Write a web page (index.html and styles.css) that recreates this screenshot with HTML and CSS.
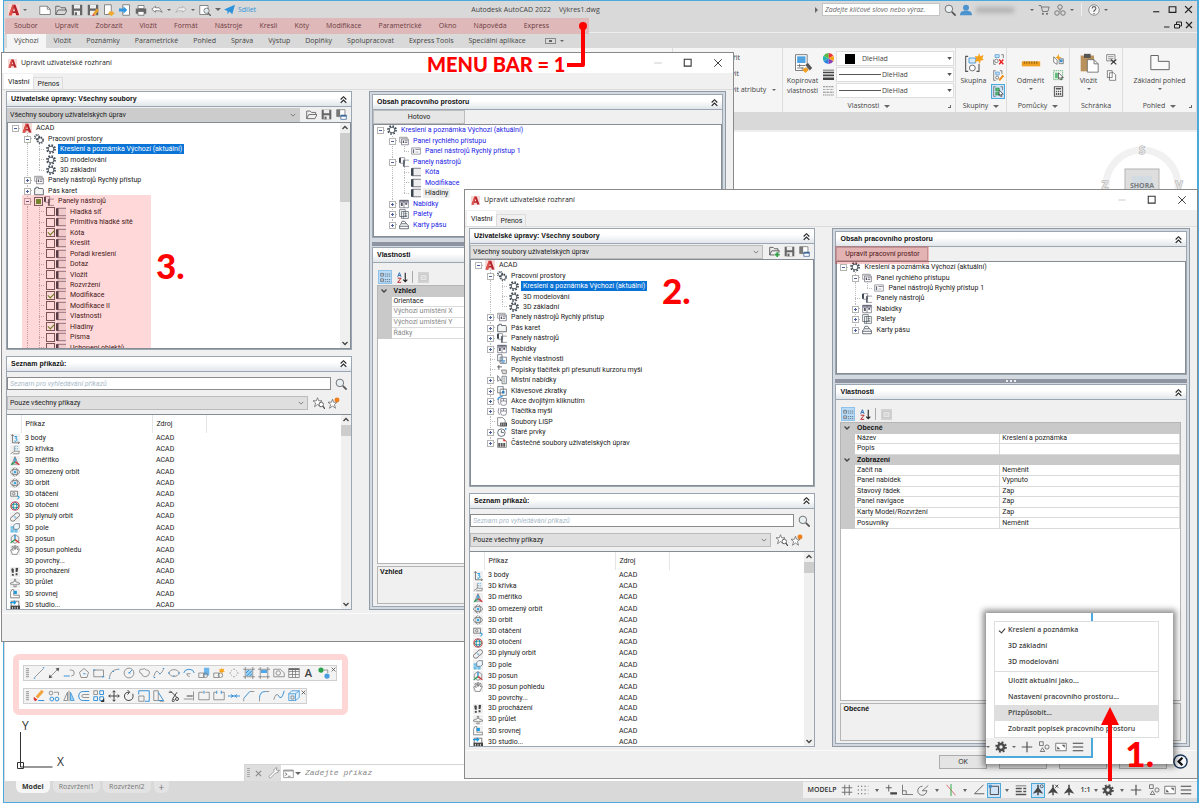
FILE: index.html
```html
<!DOCTYPE html>
<html lang="cs">
<head>
<meta charset="utf-8">
<title>Autodesk AutoCAD 2022 – Výkres1.dwg</title>
<link rel="stylesheet" href="styles.css">
</head>
<body>
<svg class="defs" aria-hidden="true">
  <symbol id="logo" viewBox="0 0 16 16"><path fill="#f6d9d6" d="M0 0h16v16H0z"/><path fill="#b5232a" d="M6 1h4l5 14h-4l-1-3H6l-1 3H1zM8 5L6.600 9.500h2.800z"/><path fill="#e0544c" d="M6 1h2L5 15H1z"/></symbol>
  <symbol id="new" viewBox="0 0 16 16"><path fill="#fff" stroke="#666" d="M1 3h10l4 4v7H1z"/><path fill="none" stroke="#666" d="M11 3v4h4"/></symbol>
  <symbol id="open" viewBox="0 0 16 16"><path fill="none" stroke="#666" stroke-width="1.300" d="M1 14V3h5l2 2h6v3M1 14l3-6h12l-3 6z"/></symbol>
  <symbol id="save" viewBox="0 0 16 16"><path fill="#666" d="M1 1h14v14H1z"/><path fill="#eee" d="M4 1h8v5H4zM4 9h8v6H4z"/><path fill="#666" d="M5 11h3v4H5z"/></symbol>
  <symbol id="saveas" viewBox="0 0 16 16"><path fill="#666" d="M1 1h14v14H1z"/><path fill="#eee" d="M4 1h8v5H4zM4 9h8v6H4z"/><path fill="#e9a22b" d="M8 13l5-7 3 2-5 7z"/><path fill="#e33" d="M8 13l3 2-4 1z"/></symbol>
  <symbol id="cloud" viewBox="0 0 16 16"><path fill="#fff" stroke="#666" d="M2 1h9v13H2z"/><path fill="#f0a92c" d="M8 10h6v2h2l-5 4-5-4h2z"/></symbol>
  <symbol id="mobile" viewBox="0 0 16 16"><path fill="#fff" stroke="#666" d="M5 1h9v14H5z"/><path fill="#3096e0" d="M0 6h6V3l5 5-5 5v-3H0z"/></symbol>
  <symbol id="print" viewBox="0 0 16 16"><path fill="#666" d="M1 6h14v7H1z"/><path fill="#fff" stroke="#666" d="M4 2h8v4H4zM4 10h8v5H4z"/></symbol>
  <symbol id="undo" viewBox="0 0 16 16"><path fill="#fff" stroke="#666" d="M1 7l5-4v2h5l4 6-4-2H6v2z"/></symbol>
  <symbol id="redo" viewBox="0 0 16 16"><path fill="#eee" stroke="#aaa" d="M15 7l-5-4v2H5l-4 6 4-2h5v2z"/></symbol>
  <symbol id="preview" viewBox="0 0 16 16"><path fill="#fff" stroke="#666" d="M1 2h11v12H1z"/><circle cx="10" cy="9" r="3.500" fill="#dfe8ef" stroke="#666"/><path stroke="#666" stroke-width="2" d="M12 12l4 4"/></symbol>
  <symbol id="plane" viewBox="0 0 16 16"><path fill="#2f93dc" d="M0 8L16 1l-4 14-4-4-3 4v-5z"/></symbol>
  <symbol id="mag" viewBox="0 0 16 16"><circle cx="6.500" cy="6.500" r="5" fill="#e8f0f4" stroke="#666" stroke-width="1.200"/><path stroke="#555" stroke-width="2.400" d="M10.500 10.500l5 5"/></symbol>
  <symbol id="user" viewBox="0 0 16 16"><circle cx="8" cy="5" r="4" fill="#4d94cf"/><path fill="#4d94cf" d="M0 15c0-5 3-6 8-6s8 1 8 6z"/></symbol>
  <symbol id="cart" viewBox="0 0 16 16"><path fill="none" stroke="#777" stroke-width="1.300" d="M1 2h3l2 8h7l2-6H5"/><circle cx="6.500" cy="13" r="1.500" fill="#777"/><circle cx="12" cy="13" r="1.500" fill="#777"/></symbol>
  <symbol id="hub" viewBox="0 0 16 16"><g fill="none" stroke="#777" stroke-width="1.300"><circle cx="8" cy="4" r="3"/><circle cx="4" cy="12" r="3"/><circle cx="12" cy="12" r="3"/><path d="M8 7v3"/></g></symbol>
  <symbol id="help" viewBox="0 0 16 16"><circle cx="8" cy="8" r="7" fill="#f4f4f4" stroke="#777"/><path fill="none" stroke="#666" stroke-width="1.500" d="M5.500 6q0-2.500 2.500-2.500T10.500 6q0 1.500-2.500 3v1.500M8 12v1.500"/></symbol>
  <symbol id="min" viewBox="0 0 16 16"><path stroke="currentColor" stroke-width="2" d="M2 12h11"/></symbol>
  <symbol id="max" viewBox="0 0 16 16"><path fill="none" stroke="currentColor" stroke-width="2" d="M2 3h12v10H2z"/></symbol>
  <symbol id="restore" viewBox="0 0 16 16"><path fill="none" stroke="currentColor" stroke-width="2" d="M1 7h10v7H1zM5 7V2h10v8h-4"/></symbol>
  <symbol id="close" viewBox="0 0 16 16"><path stroke="currentColor" stroke-width="2.400" d="M2 2l12 12M14 2L2 14"/></symbol>
  <symbol id="thinmax" viewBox="0 0 16 16"><path fill="none" stroke="#333" stroke-width="1.700" d="M2 2h11v11H2z"/></symbol>
  <symbol id="thinx" viewBox="0 0 16 16"><path stroke="#333" stroke-width="1.500" d="M2 2l12 12M14 2L2 14"/></symbol>
  <symbol id="thinmin" viewBox="0 0 16 16"><path stroke="#bbb" stroke-width="1.200" d="M2 8h12"/></symbol>
  <symbol id="dbl" viewBox="0 0 16 16"><path fill="none" stroke="#222" stroke-width="2" d="M3 8l5-5 5 5M3 14l5-5 5 5"/></symbol>
  <symbol id="up" viewBox="0 0 16 16"><path fill="none" stroke="#444" stroke-width="2.600" d="M3 11l5-5 5 5"/></symbol>
  <symbol id="down" viewBox="0 0 16 16"><path fill="none" stroke="#444" stroke-width="2.600" d="M3 5l5 5 5-5"/></symbol>
  <symbol id="addfolder" viewBox="0 0 16 16"><path fill="none" stroke="#555" stroke-width="1.300" d="M1 13V2h5l2 2h5v3M1 13l3-6h11l-1 3M1 13h7"/><path stroke="#2a9d3c" stroke-width="2.400" d="M12 9v7M8.500 12.500h7"/></symbol>
  <symbol id="layout" viewBox="0 0 16 16"><path fill="#fff" stroke="#666" d="M1 1h12v10H1z"/><path fill="#777" d="M1 1h5v10H1z"/><path fill="#fff" stroke="#27568c" d="M7 9h8v6H7z"/><path fill="#27568c" d="M7 9h8v2H7z"/></symbol>
  <symbol id="gear" viewBox="0 0 16 16"><circle cx="8" cy="8" r="6.500" fill="none" stroke="#3c4650" stroke-width="2.600" stroke-dasharray="2.550 2.550"/><circle cx="8" cy="8" r="4.600" fill="#fff" stroke="#3c4650" stroke-width="1.500"/></symbol>
  <symbol id="gears" viewBox="0 0 16 16"><circle cx="5" cy="5" r="4" fill="none" stroke="#3c4650" stroke-width="2" stroke-dasharray="1.600 1.600"/><circle cx="5" cy="5" r="2.800" fill="#fff" stroke="#3c4650"/><circle cx="10" cy="10" r="5" fill="none" stroke="#3c4650" stroke-width="2" stroke-dasharray="2 2"/><circle cx="10" cy="10" r="3.800" fill="#fff" stroke="#3c4650" stroke-width="1.300"/></symbol>
  <symbol id="quick" viewBox="0 0 16 16"><path fill="#fff" stroke="#777" d="M1 2h12v8H1z"/><path fill="#aaa" d="M1 2h12v2H1z"/><path fill="#fff" stroke="#556" d="M4 5h11v9H4z"/><path fill="#556" d="M6 7h2v4H6zM9 7h5v1.500H9zM9 10h4v1H9z"/></symbol>
  <symbol id="quick1" viewBox="0 0 16 16"><path fill="#fff" stroke="#667" d="M1 3h14v10H1z"/><path fill="#667" d="M3 5h2v6H3zM7 5h7v1.500H7zM7 9h5v1H7z"/></symbol>
  <symbol id="ribbon" viewBox="0 0 16 16"><path fill="#f4f4f4" stroke="#3c4650" stroke-width="1.200" d="M1 14V4h2V2h4v2h7l1 2v8z"/></symbol>
  <symbol id="bars" viewBox="0 0 16 16"><path fill="#fff" stroke="#667" d="M2 1h7v9H2zM7 5h9M7 5v10h9"/><path fill="#3c4650" d="M0 1h3v8H0zM7 5h2v10H7z"/></symbol>
  <symbol id="bar" viewBox="0 0 16 16"><path fill="#eee" d="M2 2h14v12H2z"/><path fill="none" stroke="#556" stroke-width="1.200" d="M16 2H2v12h14"/><path fill="#3c4650" d="M0 2h4v12H0z"/></symbol>
  <symbol id="menus" viewBox="0 0 16 16"><path fill="#fff" stroke="#556" d="M1 2h14v12H1zM1 5h14M8 2v12"/><path fill="#556" d="M1 2h14v2H1zM3 6h3v5H3zM10 6h3v3h-3z"/></symbol>
  <symbol id="palettes" viewBox="0 0 16 16"><path fill="#fff" stroke="#3c4650" d="M1 1h9v11H1zM4 4h11v11H4zM7 4v11M9 7h4M9 10h4M9 12h4"/></symbol>
  <symbol id="tabs" viewBox="0 0 16 16"><path fill="#fff" stroke="#3c4650" stroke-width="1.200" d="M3 6l2-4h4l3 4M1 14V9l3-3h8l3 3v5zM1 10h14"/></symbol>
  <symbol id="pages" viewBox="0 0 16 16"><path fill="#fff" stroke="#3c4650" d="M1 1h7v10H1zM5 5h10v10H5z"/><path stroke="#2b7fc4" stroke-width="1.500" d="M7 8h3M7 11h6M7 13h5"/></symbol>
  <symbol id="tip" viewBox="0 0 16 16"><path stroke="#222" d="M3 0v8M0 3h8"/><path fill="#ddd" stroke="#555" d="M7 8h8v6H9z"/></symbol>
  <symbol id="ctx" viewBox="0 0 16 16"><path fill="#fff" stroke="#3c4650" d="M1 1v9l3-2 3 1zM8 2h7v12H8zM10 5h3M10 8h3M10 11h3"/></symbol>
  <symbol id="keys" viewBox="0 0 16 16"><path fill="#fff" stroke="#3c4650" d="M1 1h9v10H1zM5 5h10v10H5z"/><path fill="#2b7fc4" d="M8 8h4v4H8z"/></symbol>
  <symbol id="mouse" viewBox="0 0 16 16"><path fill="#fff" stroke="#556" d="M3 3q-3 7 1 11M6 4h9v8q0 3-4.500 3T6 12zM6 8h9M10.500 4v4"/></symbol>
  <symbol id="mouse2" viewBox="0 0 16 16"><use href="#mouse"/><path fill="none" stroke="#3096e0" stroke-width="1.800" d="M1 6q1-5 8-5"/></symbol>
  <symbol id="lisp" viewBox="0 0 16 16"><path fill="#fff" stroke="#555" d="M1 1h8l4 4v9H1z"/><path fill="#444" d="M5 9h11v6H5z"/><path stroke="#fff" d="M7 10v4M10 10v4M13 10v4"/></symbol>
  <symbol id="clock" viewBox="0 0 16 16"><circle cx="7" cy="9" r="6" fill="#fff" stroke="#3c4650" stroke-width="1.200"/><path fill="none" stroke="#3c4650" stroke-width="1.300" d="M7 5v4h4"/><circle cx="14" cy="3" r="1.500" fill="#3096e0"/></symbol>
  <symbol id="cui" viewBox="0 0 16 16"><path fill="#fff" stroke="#555" d="M1 1h9l5 4v10H1z"/><path fill="#e33" d="M10 1l5 4h-5z"/><path fill="#555" d="M2 8h3v6H2zM6 8h3v6H6zM10 8h3v6h-3z"/></symbol>
  <symbol id="star" viewBox="0 0 16 16"><path fill="#fff" stroke="#666" d="M6 1l1.500 4H12L8.500 8 10 13 6 10 2 13l1.500-5L0 5h4.500z"/></symbol>
  <symbol id="starmag" viewBox="0 0 16 16"><use href="#star"/><circle cx="11" cy="10" r="3" fill="#fff" stroke="#444"/><path stroke="#444" stroke-width="1.600" d="M13 12l3 4"/></symbol>
  <symbol id="stardot" viewBox="0 0 16 16"><use href="#star" y="2"/><circle cx="12" cy="4" r="3.300" fill="#f07f1c"/></symbol>
  <symbol id="cat" viewBox="0 0 16 16"><path fill="#fff" stroke="#456" d="M1 2h4v4H1zM1 10h4v4H1zM2 4h2M2 12h2"/><path stroke="#456" stroke-dasharray="2 1" d="M7 3h8M7 6h8M7 11h8M7 14h8"/></symbol>
  <symbol id="az" viewBox="0 0 16 16"><path fill="none" stroke="#2b6cb4" stroke-width="1.400" d="M1 7l2.500-6L6 7M2 5h3"/><path fill="none" stroke="#b22" stroke-width="1.400" d="M1 9h5l-5 6h5"/><path fill="none" stroke="#222" stroke-width="1.600" d="M12 1v13M9 11l3 3 3-3"/></symbol>
  <symbol id="pg" viewBox="0 0 16 16"><path fill="#d2d2d2" d="M0 0h16v16H0z"/><path fill="#eee" stroke="#bbb" d="M3 4h10v8H3zM5 7h6M5 9h6"/></symbol>
  <symbol id="c3body" viewBox="0 0 16 16"><path fill="none" stroke="#444" d="M4 1v13h11M2 3l2-2 2 2M13 12l2 2-2 2"/><path fill="none" stroke="#1d9be0" stroke-width="1.500" d="M7 4h4L9 7q3 0 2 3t-4 1"/></symbol>
  <symbol id="ccurve" viewBox="0 0 16 16"><path fill="none" stroke="#666" d="M7 2v8L1 14M7 10h8M5 14h9l1-4"/><path stroke="#1d9be0" stroke-dasharray="2 1" d="M8 2h6M8 6h6"/></symbol>
  <symbol id="cscale" viewBox="0 0 16 16"><path fill="#cfe6f5" stroke="#555" d="M8 1l5 12H3z"/><path stroke="#1d9b4c" stroke-width="2" d="M8 9l-6 5"/><path stroke="#d33" stroke-width="2" d="M8 9l7 5"/><path stroke="#28c" stroke-width="2" d="M8 9V3"/></symbol>
  <symbol id="corbit" viewBox="0 0 16 16"><ellipse cx="8" cy="8" rx="7" ry="4" fill="none" stroke="#555"/><ellipse cx="8" cy="8" rx="4" ry="7" fill="none" stroke="#555" stroke-dasharray="7 2"/><path stroke="#1d9be0" stroke-width="2" d="M8 6v4M6 8h4"/></symbol>
  <symbol id="cspin" viewBox="0 0 16 16"><path fill="#eee" stroke="#555" d="M1 2h11v8H1z"/><circle cx="6" cy="6" r="2" fill="none" stroke="#555"/><path fill="none" stroke="#1d9be0" stroke-width="1.600" d="M11 9l4 2-3 4"/></symbol>
  <symbol id="crot" viewBox="0 0 16 16"><ellipse cx="8" cy="8" rx="6.500" ry="3" fill="none" stroke="#2a9d5c" stroke-width="1.500"/><ellipse cx="8" cy="8" rx="3" ry="6.500" fill="none" stroke="#28c" stroke-width="1.500"/><circle cx="8" cy="8" r="6.500" fill="none" stroke="#c33" stroke-width="1.500"/></symbol>
  <symbol id="cfree" viewBox="0 0 16 16"><path fill="none" stroke="#555" stroke-width="1.200" d="M5 7q5-8 9-5t-3 8M11 9q-5 8-9 5t3-8"/><path stroke="#1d9be0" stroke-width="2" d="M7 8h2"/></symbol>
  <symbol id="carr" viewBox="0 0 16 16"><path fill="#6bc0ea" d="M1 5h5v4H1zM1 10h5v5H1zM7 10h5v5H7z"/><path fill="#eef7fc" stroke="#456" d="M6 4l3-3h6v7l-3 2H6z"/></symbol>
  <symbol id="cmove" viewBox="0 0 16 16"><path fill="none" stroke="#666" d="M8 1l6 4v6l-6 4-6-4V5z"/><path stroke="#28c" stroke-width="2" d="M8 1v8"/><path stroke="#2a9d5c" stroke-width="2" d="M8 9l-7 5"/><path stroke="#c33" stroke-width="2" d="M8 9l7 5"/></symbol>
  <symbol id="chand" viewBox="0 0 16 16"><path fill="#fff" stroke="#555" d="M4 15L1 8l2-1 2 2-2-6 2-1 2 5V1h2v6l2-5 2 1-1 5 2-2 1 1-4 8z"/></symbol>
  <symbol id="cwalk" viewBox="0 0 16 16"><path fill="#444" d="M2 3q2-2 4 0v6H3zM3 11h3v3H3zM9 2q2-2 4 0l-1 6H9zM9 10h3v3H9z"/></symbol>
  <symbol id="cfly" viewBox="0 0 16 16"><path fill="#fff" stroke="#555" d="M7 2h2v4l6 2v2H9l1 4H6l1-4H1V8l6-2z"/></symbol>
  <symbol id="calign" viewBox="0 0 16 16"><path fill="#fff" stroke="#555" d="M3 1h3v9h9v4H1V5z"/><path fill="#1d9be0" d="M6 3h5v5H6z"/></symbol>
  <symbol id="c3ds" viewBox="0 0 16 16"><path fill="#fff" stroke="#444" d="M2 2h12v13H2z"/><path fill="#444" d="M1 9h15v6H1z"/><path stroke="#fff" stroke-width="1.200" d="M4 11v3M8 11v3M12 11v3"/><path fill="none" stroke="#1d9be0" stroke-width="2" d="M0 4h8M6 1l3 3-3 3"/></symbol>
  <symbol id="wheel" viewBox="0 0 16 16"><path fill="#e33" d="M8 8V0a8 8 0 0 1 7 4z"/><path fill="#f5a623" d="M8 8l7-4a8 8 0 0 1 0 8z"/><path fill="#8a3fb5" d="M8 8l7 4a8 8 0 0 1-7 4z"/><path fill="#2f7fe0" d="M8 8v8a8 8 0 0 1-7-4z"/><path fill="#25b3b0" d="M8 8l-7 4a8 8 0 0 1 0-8z"/><path fill="#58b947" d="M8 8L1 4a8 8 0 0 1 7-4z"/></symbol>
  <symbol id="lw" viewBox="0 0 16 16"><path fill="#444" d="M0 1h16v1H0zM0 4h16v2H0zM0 8h16v2.500H0zM0 12.500h16V16H0z"/></symbol>
  <symbol id="lt" viewBox="0 0 16 16"><path stroke="#555" stroke-dasharray="3 1" d="M0 2.500h16"/><path stroke="#555" stroke-dasharray="1 1" d="M0 6.500h16"/><path stroke="#555" stroke-dasharray="4 1" d="M0 10.500h16"/><path stroke="#555" stroke-dasharray="2 1" d="M0 14.500h16"/></symbol>
  <symbol id="match" viewBox="0 0 24 24"><path fill="#fff" stroke="#666" d="M3 2h14v19H3z"/><path fill="#4fa3e0" d="M5 4h10v8H5z"/><path stroke="#666" d="M5 15h10M8 13v4M5 18h8M11 17v3"/><path fill="#555" d="M15 14l3-2 5 6-3 3z"/><path fill="#f0a021" d="M15 17l4 3-4 4-4-4z"/></symbol>
  <symbol id="group" viewBox="0 0 24 24"><path fill="none" stroke="#555" stroke-width="1.300" d="M5 4H2v18h3M15 22h3v-9"/><path fill="#d5eafa" stroke="#3c8fd0" d="M6 6h8v6H6z"/><circle cx="10" cy="18" r="3.500" fill="#fff" stroke="#555"/><path fill="#f5a21b" d="M18 0l1.500 4 4-1.500-1.500 4 2 2-4 .5-1 4-2-3.500-4 1.500 1.500-4L13 4l4 0z"/></symbol>
  <symbol id="ungroup" viewBox="0 0 16 16"><path fill="none" stroke="#555" d="M1 8v7h3M12 1h3v5"/><path fill="#cfe6f8" stroke="#3c8fd0" d="M3 1h6v4H3z"/><circle cx="5" cy="10" r="2.500" fill="#fff" stroke="#555"/><path stroke="#e22" stroke-width="2" d="M9 8l6 7M15 8l-6 7"/></symbol>
  <symbol id="grpedit" viewBox="0 0 16 16"><path fill="none" stroke="#555" d="M4 1H1v14h3M10 1h3v5"/><path fill="#cfe6f8" stroke="#3c8fd0" d="M4 3h5v4H4z"/><circle cx="6" cy="11" r="2.200" fill="#fff" stroke="#555"/><path stroke="#f09020" stroke-width="3" d="M9 15l6-7"/></symbol>
  <symbol id="grpsel" viewBox="0 0 16 16"><path fill="none" stroke="#555" d="M4 1H1v14h3M11 1h3v5"/><path fill="#59bd78" stroke="#2a8d4c" d="M4 3h5v4H4zM4 9h4v4H4z"/><path fill="#fff" stroke="#333" d="M9 6l6 6-3 0 1 3-2 0-1-3-1 2z"/></symbol>
  <symbol id="ruler" viewBox="0 0 24 24"><path fill="#f0a021" d="M1 10h22v6H1z"/><path stroke="#7a5310" d="M4 10v3M7 10v3M10 10v3M13 10v3M16 10v3M19 10v3"/></symbol>
  <symbol id="qsel" viewBox="0 0 16 16"><path fill="#fff" stroke="#555" d="M1 4l5 5v6l-5-3zM9 7h6v7H9z"/><path fill="#3c8fd0" d="M10 8h4v4h-4z"/><path fill="#f5a21b" d="M8 0l1 4 4 1-4 1-1 3-2-3-3-1 3-1z"/></symbol>
  <symbol id="selall" viewBox="0 0 16 16"><path fill="none" stroke="#2a9d4c" stroke-dasharray="2 1" d="M1 1h13v13H1z"/><path fill="#59bd78" d="M3 4h4v8H3z"/><path fill="#fff" stroke="#333" d="M8 4l7 7-3 0 1 3-2 0-1-3-2 2z"/></symbol>
  <symbol id="calc" viewBox="0 0 16 16"><path fill="#fff" stroke="#555" stroke-width="1.500" d="M2 1h12v14H2z"/><path fill="#555" d="M4 3h8v2H4zM4 7h2v2H4zM7 7h2v2H7zM10 7h2v2h-2zM4 10h2v3H4zM7 10h2v3H7zM10 10h2v3h-2z"/></symbol>
  <symbol id="paste" viewBox="0 0 24 24"><path fill="#b9915c" d="M2 3h16v19H2z"/><path fill="#555" d="M6 1h8v5H6z"/><path fill="#fff" stroke="#666" d="M10 8h8l5 5v10H10zM18 8v5h5"/></symbol>
  <symbol id="cut" viewBox="0 0 16 16"><path fill="#fff" stroke="#555" d="M1 1h12v9H1zM3 4h8M3 7h8"/><path stroke="#333" stroke-width="1.500" d="M7 8l8 7M15 8l-8 7"/></symbol>
  <symbol id="copy" viewBox="0 0 16 16"><path fill="#fff" stroke="#555" d="M2 1h7v10H2zM5 4h6l3 3v8H5z"/></symbol>
  <symbol id="base" viewBox="0 0 24 24"><path fill="#fafafa" stroke="#666" stroke-width="1.200" d="M1 3h9v7h13v10H1z"/></symbol>
  <symbol id="wrench" viewBox="0 0 16 16"><path fill="#fff" stroke="#888" d="M1 13l7-7q-1-4 4-5l-1 3 2 1 2-1q0 4-5 4l-7 7z"/></symbol>
  <symbol id="prompt" viewBox="0 0 16 16"><path fill="#fff" stroke="#777" d="M1 3h14v11H1z"/><path fill="#999" d="M1 3h14v2H1z"/><path fill="none" stroke="#555" d="M3 7l3 2-3 2M7 12h4"/></symbol>
  <symbol id="grid" viewBox="0 0 16 16"><path stroke="#666" stroke-width="1.200" d="M5 1v14M11 1v14M1 5h14M1 11h14"/></symbol>
  <symbol id="dots" viewBox="0 0 16 16"><path stroke="#555" stroke-width="1.500" stroke-dasharray="1.500 3" d="M1 3h14M1 8h14M1 13h14"/></symbol>
  <symbol id="dyn" viewBox="0 0 16 16"><path stroke="#555" stroke-width="1.200" d="M5 1v9M1 5h8"/><path fill="#444" d="M7 11h9v3H7z"/></symbol>
  <symbol id="ortho" viewBox="0 0 16 16"><path fill="none" stroke="#666" stroke-width="1.100" d="M2 1v13h14M2 9h5v5"/></symbol>
  <symbol id="polar" viewBox="0 0 16 16"><circle cx="7" cy="9" r="6" fill="none" stroke="#555" stroke-dasharray="28 8"/><path fill="none" stroke="#555" d="M15 2L7 9h6"/></symbol>
  <symbol id="iso" viewBox="0 0 16 16"><path stroke="#d44" d="M2 1l12 14"/><path stroke="#3a4" stroke-width="1.300" d="M8 0v16"/></symbol>
  <symbol id="otrack" viewBox="0 0 16 16"><path fill="none" stroke="#555" stroke-width="1.200" d="M14 1L2 13h13"/></symbol>
  <symbol id="osnap" viewBox="0 0 16 16"><path fill="none" stroke="#444" stroke-width="1.200" d="M3 3h11v11H3z"/><path fill="#3c8fd0" d="M1 1h4v4H1z"/></symbol>
  <symbol id="lwt" viewBox="0 0 16 16"><path fill="#555" d="M1 2h14v1H1zM1 5h8v2H1zM11 5h4v2h-4zM1 9h8v2H1zM11 9h4v2h-4zM1 13h14v2H1z"/></symbol>
  <symbol id="anno" viewBox="0 0 16 16"><path fill="#444" d="M7 1h2v4l6 8-6-2v4H7v-4l-6 2 6-8z"/></symbol>
  <symbol id="anno1" viewBox="0 0 16 16"><use href="#anno"/><circle cx="13" cy="3" r="2" fill="none" stroke="#444"/></symbol>
  <symbol id="anno2" viewBox="0 0 16 16"><use href="#anno"/><path stroke="#444" stroke-width="1.300" d="M11 1l4 4M15 1l-4 4"/></symbol>
  <symbol id="cog" viewBox="0 0 16 16"><circle cx="8" cy="8" r="4" fill="none" stroke="#4a4a4a" stroke-width="3.500"/><circle cx="8" cy="8" r="6.500" fill="none" stroke="#4a4a4a" stroke-width="2.500" stroke-dasharray="2.550 2.550"/></symbol>
  <symbol id="plus" viewBox="0 0 16 16"><path stroke="#555" stroke-width="1.600" d="M8 1v14M1 8h14"/></symbol>
  <symbol id="iso3" viewBox="0 0 16 16"><g fill="none" stroke="#555"><path d="M2 1h5v5H2zM6 9l3 5H3z"/><circle cx="12" cy="8" r="2.800"/></g></symbol>
  <symbol id="full" viewBox="0 0 16 16"><path fill="#fff" stroke="#555" d="M1 3h14v10H1z"/><path fill="#555" d="M9 5h4v4zM7 11H3V7z"/></symbol>
  <symbol id="ham" viewBox="0 0 16 16"><path stroke="#444" stroke-width="1.600" d="M1 3h14M1 8h14M1 13h14"/></symbol>
</svg>

<main class="app">
  <header class="titlebar">
    <div class="group">
      <button class="icon big" aria-label="Nabídka aplikace"><svg><use href="#logo"/></svg></button><button class="caret" aria-label="Rozbalit"></button>
      <div class="group quick">
        <button class="icon" aria-label="Nový"><svg><use href="#new"/></svg></button>
        <button class="icon" aria-label="Otevřít"><svg><use href="#open"/></svg></button>
        <button class="icon" aria-label="Uložit"><svg><use href="#save"/></svg></button>
        <button class="icon" aria-label="Uložit jako"><svg><use href="#saveas"/></svg></button>
        <button class="icon" aria-label="Otevřít z webu"><svg><use href="#cloud"/></svg></button>
        <button class="icon" aria-label="Uložit na web"><svg><use href="#mobile"/></svg></button>
        <button class="icon" aria-label="Tisk"><svg><use href="#print"/></svg></button>
        <button class="icon" aria-label="Zpět"><svg><use href="#undo"/></svg></button><button class="caret" aria-label="Historie zpět"></button>
        <button class="icon" aria-label="Znovu"><svg><use href="#redo"/></svg></button><button class="caret" aria-label="Historie znovu"></button>
        <button class="icon" aria-label="Náhled"><svg><use href="#preview"/></svg></button><button class="caret wide bar" aria-label="Přizpůsobit panel"></button>
      </div>
      <button class="share"><svg><use href="#plane"/></svg>Sdílet</button>
    </div>
    <h1>Autodesk AutoCAD 2022<span>Výkres1.dwg</span></h1>
    <div class="group account">
      <i class="tri"></i>
      <input class="search" type="text" aria-label="Hledat" placeholder="Zadejte klíčové slovo nebo výraz.">
      <button class="icon" aria-label="Hledat"><svg><use href="#mag"/></svg></button>
      <button class="icon" aria-label="Účet"><svg><use href="#user"/></svg></button>
      <span class="smudge"></span>
      <button class="caret" aria-label="Nabídka účtu"></button>
      <button class="icon" aria-label="Obchod"><svg><use href="#cart"/></svg></button>
      <button class="icon" aria-label="Propojit"><svg><use href="#hub"/></svg></button><button class="caret" aria-label="Rozbalit"></button>
      <i class="rule"></i>
      <button class="icon" aria-label="Nápověda"><svg><use href="#help"/></svg></button><button class="caret" aria-label="Rozbalit"></button>
      <div class="winctl">
        <button aria-label="Minimalizovat"><svg><use href="#min"/></svg></button>
        <button aria-label="Maximalizovat"><svg><use href="#max"/></svg></button>
        <button aria-label="Zavřít"><svg><use href="#close"/></svg></button>
      </div>
    </div>
  </header>

  <div class="menurow">
    <nav class="menubar">
      <a href="#">Soubor</a><a href="#">Upravit</a><a href="#">Zobrazit</a><a href="#">Vložit</a><a href="#">Formát</a><a href="#">Nástroje</a><a href="#">Kresli</a><a href="#">Kóty</a><a href="#">Modifikace</a><a href="#">Parametrické</a><a href="#">Okno</a><a href="#">Nápověda</a><a href="#">Express</a>
    </nav>
    <div class="winctl small">
      <button aria-label="Minimalizovat výkres"><svg><use href="#min"/></svg></button>
      <button aria-label="Obnovit výkres"><svg><use href="#restore"/></svg></button>
      <button aria-label="Zavřít výkres"><svg><use href="#close"/></svg></button>
    </div>
  </div>

  <nav class="ribbontabs">
    <a class="on" href="#">Výchozí</a><a href="#">Vložit</a><a href="#">Poznámky</a><a href="#">Parametrické</a><a href="#">Pohled</a><a href="#">Správa</a><a href="#">Výstup</a><a href="#">Doplňky</a><a href="#">Spolupracovat</a><a href="#">Express Tools</a><a href="#">Speciální aplikace</a>
    <button class="pin" aria-label="Minimalizovat pás karet"></button><i class="caret"></i>
  </nav>

  <div class="ribbon">
    <section class="rp fill"></section>
    <section class="rp block">
      <div class="body col"><button>Vytvořit</button><button>Upravit</button><button>Upravit atributy<i class="caret"></i></button></div>
      <footer><i class="caret wide"></i></footer>
    </section>
    <section class="rp props">
      <div class="body">
        <button class="bigbtn"><svg><use href="#match"/></svg>Kopírovat<br>vlastnosti</button>
        <div class="fields">
          <label class="fld"><svg><use href="#wheel"/></svg><span class="box"><i class="swatch"></i><select aria-label="Barva"><option>DleHlad</option></select></span></label>
          <label class="fld"><svg><use href="#lw"/></svg><span class="box"><i class="line"></i><select aria-label="Tloušťka čáry"><option>DleHlad</option></select></span></label>
          <label class="fld"><svg><use href="#lt"/></svg><span class="box"><i class="line"></i><select aria-label="Typ čáry"><option>DleHlad</option></select></span></label>
        </div>
      </div>
      <footer>Vlastnosti<i class="caret wide"></i><i class="corner"></i></footer>
    </section>
    <section class="rp grp">
      <div class="body">
        <button class="bigbtn"><svg><use href="#group"/></svg>Skupina</button>
        <div class="stack"><button aria-label="Rozdělit skupinu"><svg><use href="#ungroup"/></svg></button><button aria-label="Upravit skupinu"><svg><use href="#grpedit"/></svg></button><button class="on" aria-label="Výběr skupiny"><svg><use href="#grpsel"/></svg></button></div>
      </div>
      <footer>Skupiny<i class="caret wide"></i></footer>
    </section>
    <section class="rp util">
      <div class="body">
        <button class="bigbtn"><svg><use href="#ruler"/></svg>Odměřit<i class="caret"></i></button>
        <div class="stack"><button aria-label="Rychlý výběr"><svg><use href="#qsel"/></svg></button><button aria-label="Vybrat vše"><svg><use href="#selall"/></svg></button><button aria-label="Kalkulačka"><svg><use href="#calc"/></svg></button></div>
      </div>
      <footer>Pomůcky<i class="caret wide"></i></footer>
    </section>
    <section class="rp clip">
      <div class="body">
        <button class="bigbtn"><svg><use href="#paste"/></svg>Vložit<i class="caret"></i></button>
        <div class="stack"><button aria-label="Vyjmout"><svg><use href="#cut"/></svg></button><button aria-label="Kopírovat"><svg><use href="#copy"/></svg></button></div>
      </div>
      <footer>Schránka</footer>
    </section>
    <section class="rp base">
      <div class="body"><button class="bigbtn"><svg><use href="#base"/></svg>Základní pohled<i class="caret"></i></button></div>
      <footer>Pohled<i class="caret wide"></i><i class="corner"></i></footer>
    </section>
  </div>

  <div class="canvas">
    <svg class="cube" viewBox="0 0 90 60">
      <circle cx="45" cy="44" r="36" fill="none" stroke="#f1f1f1" stroke-width="7"/>
      <rect x="28" y="27" width="34" height="32" fill="#dedede" stroke="#b4b4b4"/>
      <rect x="35" y="34" width="20" height="18" fill="#d3dbe2"/>
      <g class="dir"><text x="45" y="12">S</text><text x="8" y="47">Z</text><text x="82" y="47">V</text></g>
      <text class="face" x="45" y="46">SHORA</text>
    </svg>

    <div class="toolbars">
      <div class="tb">
        <i class="grip"></i>
        <button aria-label="Úsečka"><svg viewBox="0 0 16 16"><path class="k" d="M2 14L14 2"/><path class="b" d="M1 15h2M13 1h2"/></svg></button>
        <button aria-label="Přímka"><svg viewBox="0 0 16 16"><path class="k" d="M2 14L14 2"/><path fill="#555" d="M1 15l1-5 4 4zM15 1l-1 5-4-4z"/></svg></button>
        <button aria-label="Křivka"><svg viewBox="0 0 16 16"><path class="k" d="M9 4h2q4 0 4 4t-4 4"/><path class="b" d="M1 12h8"/></svg></button>
        <button aria-label="Polygon"><svg viewBox="0 0 16 16"><path class="k" d="M8 2l6 5-2 7H4L2 7z"/><path class="b" d="M7 9h3"/></svg></button>
        <button aria-label="Obdélník"><svg viewBox="0 0 16 16"><path class="k" d="M1 4h13v9H1z"/><path class="b" d="M0 4h3M12 13h3"/></svg></button>
        <button aria-label="Oblouk"><svg viewBox="0 0 16 16"><path class="k" d="M2 14Q3 4 13 3"/><path class="b" d="M1 15h2M6 6h2M13 3h2"/></svg></button>
        <button aria-label="Kružnice"><svg viewBox="0 0 16 16"><circle class="k" cx="8" cy="8" r="6.500"/><path class="b" d="M8 8l4-4M7 8h3"/></svg></button>
        <button aria-label="Revizní obláček"><svg viewBox="0 0 16 16"><path class="k" d="M2 5q0-3 4-2 3-2 5 1 5 0 4 5-1 4-6 4-4-1-4-4-3 0-3-4z"/></svg></button>
        <button aria-label="Spline"><svg viewBox="0 0 16 16"><path class="k" d="M1 13q3-11 6-6t7-4"/><path class="b" d="M1 14h2M8 9h2M13 2h2"/></svg></button>
        <button aria-label="Elipsa"><svg viewBox="0 0 16 16"><ellipse class="k" cx="8" cy="8" rx="6.500" ry="4.500"/><path class="b" d="M1 7v2M15 7v2M7 12h2"/></svg></button>
        <button aria-label="Eliptický oblouk"><svg viewBox="0 0 16 16"><path class="b" d="M1 8q1-5 7-5t7 5"/><path class="k" d="M5 9h5M5 9q0 3 4 4"/></svg></button>
        <button aria-label="Vložit blok"><svg viewBox="0 0 16 16"><path fill="#6bb6ec" d="M8 1h7v10H8z"/><path class="k" d="M1 8h7v6H1z"/><circle class="k" cx="10" cy="11" r="3"/></svg></button>
        <button aria-label="Vytvořit blok"><svg viewBox="0 0 16 16"><path class="k" d="M1 8h7v6H1z"/><circle class="k" cx="10" cy="11" r="3"/><path fill="#f5a21b" d="M11 0l1 3 3-1-1 3 2 1-3 1-1 2-1-2-3 0 1-2-1-2 3 0z"/></svg></button>
        <button aria-label="Bod"><svg viewBox="0 0 16 16"><path class="k" d="M7 3h2M7 13h2M2 8h2M12 8h2M4 5h1M11 5h1M4 11h1M11 11h1"/></svg></button>
        <button aria-label="Šrafy"><svg viewBox="0 0 16 16"><path fill="#9bd0f3" d="M4 4h8v8H4z"/><path class="k" d="M3 0v16M13 0v16M0 3h16M0 13h16"/><path class="b" d="M4 8l4-4M5 12l7-7M9 12l3-3"/></svg></button>
        <button aria-label="Přechod"><svg viewBox="0 0 16 16"><path fill="#4ea7e6" d="M4 4h8v4H4z"/><path class="k" d="M3 0v16M13 0v16M0 3h16M0 13h16"/></svg></button>
        <button aria-label="Oblast"><svg viewBox="0 0 16 16"><path class="k" d="M1 3h9l5 5v5H1z"/><circle class="k" cx="7" cy="8" r="3"/></svg></button>
        <button aria-label="Tabulka"><svg viewBox="0 0 16 16"><path class="k" d="M1 2h14v12H1zM1 6h14M1 10h14M6 2v12M10 2v12"/><path fill="#666" d="M1 2h14v2H1z"/></svg></button>
        <button class="letter" aria-label="Text">A</button>
        <button aria-label="Přidat vybrané"><svg viewBox="0 0 16 16"><circle cx="4" cy="4" r="3.500" fill="#2aa34c"/><circle cx="12" cy="12" r="3.500" fill="#4a9ee0"/><path class="k" d="M8 4h5v4"/></svg></button>
        <button class="x" aria-label="Zavřít panel"><svg><use href="#close"/></svg></button>
      </div>
      <div class="tb">
        <i class="grip"></i>
        <button aria-label="Vymazat"><svg viewBox="0 0 16 16"><path stroke="#f2a33c" stroke-width="4" d="M5 10l8-9"/><path fill="#d33" d="M1 9l5 4-3 2-2-2z"/><path class="b" d="M7 14h8"/></svg></button>
        <button aria-label="Kopírovat objekt"><svg viewBox="0 0 16 16"><circle class="k" cx="4" cy="4" r="2.500"/><circle class="b" cx="5" cy="12" r="2.500"/><circle class="b" cx="12" cy="12" r="2.500"/><path class="k" d="M8 3h6v4"/></svg></button>
        <button aria-label="Zrcadlit"><svg viewBox="0 0 16 16"><path class="k" d="M6 3v11H1z"/><path fill="#9bd0f5" stroke="#3490d8" d="M10 3v11h5z"/><path class="k" d="M8 1v14"/></svg></button>
        <button aria-label="Ekvidistanta"><svg viewBox="0 0 16 16"><path class="b" d="M15 2H7q-6 0-6 6t6 6h8"/><path class="k" d="M15 6H8Q5 6 5 8t3 2h7"/></svg></button>
        <button aria-label="Pole"><svg viewBox="0 0 16 16"><path class="k" d="M1 1h5v5H1z"/><path class="b" d="M9 1h5v5H9zM1 9h5v5H1zM9 9h5v5H9z"/><path fill="#333" d="M15 11v5h-5z"/></svg></button>
        <button aria-label="Posunout"><svg viewBox="0 0 16 16"><path class="d" d="M8 1v14M1 8h14M6 3l2-2 2 2M6 13l2 2 2-2M3 6L1 8l2 2M13 6l2 2-2 2"/></svg></button>
        <button aria-label="Otočit"><svg viewBox="0 0 16 16"><path class="d" d="M13 5q2 8-5 9-6 0-6-6 0-5 6-5M6 0l3 3-3 3"/></svg></button>
        <button aria-label="Měřítko"><svg viewBox="0 0 16 16"><path class="b" d="M1 6V1h14v14H9"/><path class="k" d="M1 8h7v7H1z"/></svg></button>
        <button aria-label="Protáhnout"><svg viewBox="0 0 16 16"><path class="k" d="M1 1h6v13H1z"/><path class="b" d="M7 3l7 11H7"/><path class="k" d="M9 15h6"/></svg></button>
        <button aria-label="Oříznout"><svg viewBox="0 0 16 16"><path class="d" d="M3 1l9 9M12 3L6 12"/><circle class="d" cx="12" cy="12" r="2"/><circle class="d" cx="7" cy="14" r="1.500"/><path class="d" d="M1 3h4"/></svg></button>
        <button aria-label="Prodloužit"><svg viewBox="0 0 16 16"><path class="k" d="M14 2v12M1 12h12"/><path class="d" d="M5 8h8"/></svg></button>
        <button aria-label="Přerušit v bodě"><svg viewBox="0 0 16 16"><path class="k" d="M10 3h5v10H1V3h6"/><path class="b" d="M8 1v4"/></svg></button>
        <button aria-label="Přerušit"><svg viewBox="0 0 16 16"><path class="k" d="M11 3h4v10H1V3h4"/><path class="b" d="M5 1v4M11 1v4"/></svg></button>
        <button aria-label="Spojit"><svg viewBox="0 0 16 16"><path class="b" d="M0 8h16M4 6l3 2-3 2M12 6L9 8l3 2"/></svg></button>
        <button aria-label="Zkosit"><svg viewBox="0 0 16 16"><path class="k" d="M1 15v-4M9 2h6"/><path class="b" d="M1 11l8-9"/></svg></button>
        <button aria-label="Zaoblit"><svg viewBox="0 0 16 16"><path class="k" d="M2 15v-4M10 2h5"/><path class="b" d="M2 11q0-9 8-9"/></svg></button>
        <button aria-label="Sloučit křivky"><svg viewBox="0 0 16 16"><path class="k" d="M1 13q3-10 6-6"/><path class="b" d="M7 7q4 9 8-6"/></svg></button>
        <button aria-label="Rozložit"><svg viewBox="0 0 16 16"><path fill="#e3f1fb" stroke="#3490d8" d="M1 5h9v9H1zM1 5l4-4h10v9l-5 4M10 5l5-4"/><path class="k" d="M4 8h4v4H4z"/></svg></button>
        <button class="x" aria-label="Zavřít panel"><svg><use href="#close"/></svg></button>
      </div>
    </div>

    <svg class="ucs" viewBox="0 0 54 54"><path fill="none" stroke="#333" d="M4.500 15v35h32M1.500 45.500h6v6h-6z"/><text x="6" y="13">Y</text><text x="41" y="49">X</text></svg>

    <div class="cmdline">
      <div class="tools"><i class="grip"></i><button aria-label="Zavřít"><svg><use href="#close"/></svg></button><button class="w" aria-label="Přizpůsobit"><svg><use href="#wrench"/></svg></button></div>
      <svg><use href="#prompt"/></svg><i class="caret wide"></i>
      <input type="text" aria-label="Příkazový řádek" placeholder="Zadejte příkaz">
    </div>
  </div>

  <footer class="bottom">
    <nav class="layouts"><a class="on" href="#">Model</a><a href="#">Rozvržení1</a><a href="#">Rozvržení2</a><a class="add" href="#">+</a></nav>
    <div class="status">
      <button class="txt">MODELP</button>
      <button aria-label="Rastr"><svg><use href="#grid"/></svg></button>
      <button aria-label="Krok"><svg><use href="#dots"/></svg></button><i class="caret"></i>
      <button aria-label="Dynamické zadání"><svg><use href="#dyn"/></svg></button>
      <button aria-label="Orto"><svg><use href="#ortho"/></svg></button>
      <button aria-label="Polární"><svg><use href="#polar"/></svg></button><i class="caret"></i>
      <button aria-label="Izometrie"><svg><use href="#iso"/></svg></button><i class="caret"></i>
      <button aria-label="Trasování"><svg><use href="#otrack"/></svg></button>
      <button class="on" aria-label="Uchopení"><svg><use href="#osnap"/></svg></button><i class="caret"></i>
      <button aria-label="Tloušťka"><svg><use href="#lwt"/></svg></button>
      <button class="on gap" aria-label="Poznámky"><svg><use href="#anno1"/></svg></button>
      <button aria-label="Automatické měřítko"><svg><use href="#anno2"/></svg></button>
      <button aria-label="Měřítko poznámek"><svg><use href="#anno"/></svg></button>
      <button class="txt scale">1:1</button><i class="caret tight"></i>
      <button aria-label="Pracovní prostor"><svg><use href="#cog"/></svg></button><i class="caret"></i>
      <button aria-label="Přidat"><svg><use href="#plus"/></svg></button>
      <button class="gap" aria-label="Izolovat"><svg><use href="#iso3"/></svg></button>
      <button aria-label="Celá obrazovka"><svg><use href="#full"/></svg></button>
      <button aria-label="Přizpůsobení"><svg><use href="#ham"/></svg></button>
    </div>
  </footer>

  <section class="dialog one" aria-label="Upravit uživatelské rozhraní">
    <header><svg class="lg"><use href="#logo"/></svg><h2>Upravit uživatelské rozhraní</h2><button aria-label="Minimalizovat"><svg><use href="#thinmin"/></svg></button><button aria-label="Maximalizovat"><svg><use href="#thinmax"/></svg></button><button aria-label="Zavřít"><svg><use href="#thinx"/></svg></button></header>
    <nav class="dtabs"><a class="on" href="#">Vlastní</a><a href="#">Přenos</a></nav>
    <div class="content">
      <div class="left">
        <section class="panel">
          <h3>Uživatelské úpravy: Všechny soubory<svg><use href="#dbl"/></svg></h3>
          <div class="pick dim"><select aria-label="Soubory úprav"><option>Všechny soubory uživatelských úprav</option></select><button aria-label="Načíst"><svg><use href="#open"/></svg></button><button aria-label="Uložit"><svg><use href="#save"/></svg></button><button aria-label="Zobrazení"><svg><use href="#layout"/></svg></button></div>
          <div class="view">
            <ul class="tree r22">
              <li><button class="m root" aria-label="Sbalit"></button><svg><use href="#logo"/></svg>ACAD</li>
              <li><i class="e"></i><button class="m" aria-label="Sbalit"></button><svg><use href="#gears"/></svg>Pracovní prostory</li>
              <li><i class="e"></i><i></i><i class="t"></i><svg><use href="#gear"/></svg><b class="sel">Kreslení a poznámka Výchozí (aktuální)</b></li>
              <li><i class="e"></i><i></i><i class="t"></i><svg><use href="#gear"/></svg>3D modelování</li>
              <li><i class="e"></i><i></i><i class="t l"></i><svg><use href="#gear"/></svg>3D základní</li>
              <li><i class="e"></i><button class="p" aria-label="Rozbalit"></button><svg><use href="#quick"/></svg>Panely nástrojů Rychlý přístup</li>
              <li><i class="e"></i><button class="p" aria-label="Rozbalit"></button><svg><use href="#ribbon"/></svg>Pás karet</li>
              <li><i class="e"></i><button class="m" aria-label="Sbalit"></button><label><input class="part" type="checkbox"><svg><use href="#bars"/></svg>Panely nástrojů</label></li>
              <li><i class="e"></i><i></i><i class="t"></i><label><input type="checkbox"><svg><use href="#bar"/></svg>Hladká síť</label></li>
              <li><i class="e"></i><i></i><i class="t"></i><label><input type="checkbox"><svg><use href="#bar"/></svg>Primitiva hladké sítě</label></li>
              <li><i class="e"></i><i></i><i class="t"></i><label><input type="checkbox" checked><svg><use href="#bar"/></svg>Kóta</label></li>
              <li><i class="e"></i><i></i><i class="t"></i><label><input type="checkbox"><svg><use href="#bar"/></svg>Kreslit</label></li>
              <li><i class="e"></i><i></i><i class="t"></i><label><input type="checkbox"><svg><use href="#bar"/></svg>Pořadí kreslení</label></li>
              <li><i class="e"></i><i></i><i class="t"></i><label><input type="checkbox"><svg><use href="#bar"/></svg>Dotaz</label></li>
              <li><i class="e"></i><i></i><i class="t"></i><label><input type="checkbox"><svg><use href="#bar"/></svg>Vložit</label></li>
              <li><i class="e"></i><i></i><i class="t"></i><label><input type="checkbox"><svg><use href="#bar"/></svg>Rozvržení</label></li>
              <li><i class="e"></i><i></i><i class="t"></i><label><input type="checkbox" checked><svg><use href="#bar"/></svg>Modifikace</label></li>
              <li><i class="e"></i><i></i><i class="t"></i><label><input type="checkbox"><svg><use href="#bar"/></svg>Modifikace II</label></li>
              <li><i class="e"></i><i></i><i class="t"></i><label><input type="checkbox"><svg><use href="#bar"/></svg>Vlastnosti</label></li>
              <li><i class="e"></i><i></i><i class="t"></i><label><input type="checkbox" checked><svg><use href="#bar"/></svg>Hladiny</label></li>
              <li><i class="e"></i><i></i><i class="t"></i><label><input type="checkbox"><svg><use href="#bar"/></svg>Písma</label></li>
              <li><i class="e"></i><i></i><i class="t"></i><label><input type="checkbox"><svg><use href="#bar"/></svg>Uchopení objektů</label></li>
            </ul>
            <div class="sb long"><svg><use href="#up"/></svg><i></i><svg><use href="#down"/></svg></div>
            <div class="tint branch"></div>
          </div>
        </section>
        <section class="panel">
          <h3>Seznam příkazů:<svg><use href="#dbl"/></svg></h3>
          <div class="find"><input type="text" aria-label="Hledat příkaz" placeholder="Seznam pro vyhledávání příkazů"><button aria-label="Hledat"><svg><use href="#mag"/></svg></button></div>
          <div class="filter"><select aria-label="Kategorie"><option>Pouze všechny příkazy</option></select><button aria-label="Najít oblíbené"><svg><use href="#starmag"/></svg></button><button aria-label="Nová oblíbená"><svg><use href="#stardot"/></svg></button></div>
          <div class="view">
            <table class="cmds">
              <thead><tr><th></th><th>Příkaz</th><th>Zdroj</th><th></th></tr></thead>
              <tbody>
                <tr><td><svg><use href="#c3body"/></svg></td><td>3 body</td><td>ACAD</td></tr>
                <tr><td><svg><use href="#ccurve"/></svg></td><td>3D křivka</td><td>ACAD</td></tr>
                <tr><td><svg><use href="#cscale"/></svg></td><td>3D měřítko</td><td>ACAD</td></tr>
                <tr><td><svg><use href="#corbit"/></svg></td><td>3D omezený orbit</td><td>ACAD</td></tr>
                <tr><td><svg><use href="#corbit"/></svg></td><td>3D orbit</td><td>ACAD</td></tr>
                <tr><td><svg><use href="#cspin"/></svg></td><td>3D otáčení</td><td>ACAD</td></tr>
                <tr><td><svg><use href="#crot"/></svg></td><td>3D otočení</td><td>ACAD</td></tr>
                <tr><td><svg><use href="#cfree"/></svg></td><td>3D plynulý orbit</td><td>ACAD</td></tr>
                <tr><td><svg><use href="#carr"/></svg></td><td>3D pole</td><td>ACAD</td></tr>
                <tr><td><svg><use href="#cmove"/></svg></td><td>3D posun</td><td>ACAD</td></tr>
                <tr><td><svg><use href="#chand"/></svg></td><td>3D posun pohledu</td><td>ACAD</td></tr>
                <tr><td></td><td>3D povrchy...</td><td>ACAD</td></tr>
                <tr><td><svg><use href="#cwalk"/></svg></td><td>3D procházení</td><td>ACAD</td></tr>
                <tr><td><svg><use href="#cfly"/></svg></td><td>3D průlet</td><td>ACAD</td></tr>
                <tr><td><svg><use href="#calign"/></svg></td><td>3D srovnej</td><td>ACAD</td></tr>
                <tr><td><svg><use href="#c3ds"/></svg></td><td>3D studio...</td><td>ACAD</td></tr>
              </tbody>
            </table>
            <div class="sb"><svg><use href="#up"/></svg><i></i><svg><use href="#down"/></svg></div>
          </div>
        </section>
      </div>
      <div class="right">
        <section class="panel">
          <h3>Obsah pracovního prostoru<svg><use href="#dbl"/></svg></h3>
          <div class="act"><button>Hotovo</button></div>
          <div class="view">
            <ul class="tree r10 blue">
              <li><button class="m root" aria-label="Sbalit"></button><svg><use href="#gear"/></svg>Kreslení a poznámka Výchozí (aktuální)</li>
              <li><i class="e"></i><button class="m" aria-label="Sbalit"></button><svg><use href="#quick"/></svg>Panel rychlého přístupu</li>
              <li><i class="e"></i><i></i><i class="t l"></i><svg><use href="#quick1"/></svg>Panel nástrojů Rychlý přístup 1</li>
              <li><i class="e"></i><button class="m" aria-label="Sbalit"></button><svg><use href="#bars"/></svg>Panely nástrojů</li>
              <li><i class="e"></i><i></i><i class="t"></i><svg><use href="#bar"/></svg>Kóta</li>
              <li><i class="e"></i><i></i><i class="t"></i><svg><use href="#bar"/></svg>Modifikace</li>
              <li><i class="e"></i><i></i><i class="t l"></i><svg><use href="#bar"/></svg><b class="idle">Hladiny</b></li>
              <li><i class="e"></i><button class="p" aria-label="Rozbalit"></button><svg><use href="#menus"/></svg>Nabídky</li>
              <li><i class="e"></i><button class="p" aria-label="Rozbalit"></button><svg><use href="#palettes"/></svg>Palety</li>
              <li><i class="e"></i><button class="p l" aria-label="Rozbalit"></button><svg><use href="#tabs"/></svg>Karty pásu</li>
            </ul>
          </div>
        </section>
        <div class="split"><i></i><i></i><i></i></div>
        <section class="panel grow">
          <h3>Vlastnosti<svg><use href="#dbl"/></svg></h3>
          <div class="sheet">
            <div class="sorts"><button class="on" aria-label="Podle kategorií"><svg><use href="#cat"/></svg></button><button aria-label="Abecedně"><svg><use href="#az"/></svg></button><i></i><button aria-label="Stránky"><svg><use href="#pg"/></svg></button></div>
            <div class="gridbox">
              <table class="pg n5">
                <colgroup><col class="gut"><col class="key"><col></colgroup>
                <tr class="cat"><td><svg><use href="#down"/></svg></td><th colspan="2">Vzhled</th></tr>
                <tr><td></td><td>Orientace</td><td></td></tr>
                <tr class="off"><td></td><td>Výchozí umístění X</td><td></td></tr>
                <tr class="off"><td></td><td>Výchozí umístění Y</td><td></td></tr>
                <tr class="off"><td></td><td>Řádky</td><td></td></tr>
              </table>
            </div>
            <div class="desc">Vzhled</div>
          </div>
        </section>
      </div>
    </div>
    <footer></footer>
  </section>

  <section class="dialog two" aria-label="Upravit uživatelské rozhraní">
    <header><svg class="lg"><use href="#logo"/></svg><h2>Upravit uživatelské rozhraní</h2><button aria-label="Minimalizovat"><svg><use href="#thinmin"/></svg></button><button aria-label="Maximalizovat"><svg><use href="#thinmax"/></svg></button><button aria-label="Zavřít"><svg><use href="#thinx"/></svg></button></header>
    <nav class="dtabs"><a class="on" href="#">Vlastní</a><a href="#">Přenos</a></nav>
    <div class="content">
      <div class="left">
        <section class="panel">
          <h3>Uživatelské úpravy: Všechny soubory<svg><use href="#dbl"/></svg></h3>
          <div class="pick"><select aria-label="Soubory úprav"><option>Všechny soubory uživatelských úprav</option></select><button aria-label="Načíst"><svg><use href="#addfolder"/></svg></button><button aria-label="Uložit"><svg><use href="#save"/></svg></button><button aria-label="Zobrazení"><svg><use href="#layout"/></svg></button></div>
          <div class="view">
            <ul class="tree r18">
              <li><button class="m root" aria-label="Sbalit"></button><svg><use href="#logo"/></svg>ACAD</li>
              <li><i class="e"></i><button class="m" aria-label="Sbalit"></button><svg><use href="#gears"/></svg>Pracovní prostory</li>
              <li><i class="e"></i><i></i><i class="t"></i><svg><use href="#gear"/></svg><b class="sel">Kreslení a poznámka Výchozí (aktuální)</b></li>
              <li><i class="e"></i><i></i><i class="t"></i><svg><use href="#gear"/></svg>3D modelování</li>
              <li><i class="e"></i><i></i><i class="t l"></i><svg><use href="#gear"/></svg>3D základní</li>
              <li><i class="e"></i><button class="p" aria-label="Rozbalit"></button><svg><use href="#quick"/></svg>Panely nástrojů Rychlý přístup</li>
              <li><i class="e"></i><button class="p" aria-label="Rozbalit"></button><svg><use href="#ribbon"/></svg>Pás karet</li>
              <li><i class="e"></i><button class="p" aria-label="Rozbalit"></button><svg><use href="#bars"/></svg>Panely nástrojů</li>
              <li><i class="e"></i><button class="p" aria-label="Rozbalit"></button><svg><use href="#menus"/></svg>Nabídky</li>
              <li><i class="e"></i><i class="t"></i><svg><use href="#pages"/></svg>Rychlé vlastnosti</li>
              <li><i class="e"></i><i class="t"></i><svg><use href="#tip"/></svg>Popisky tlačítek při přesunutí kurzoru myši</li>
              <li><i class="e"></i><button class="p" aria-label="Rozbalit"></button><svg><use href="#ctx"/></svg>Místní nabídky</li>
              <li><i class="e"></i><button class="p" aria-label="Rozbalit"></button><svg><use href="#keys"/></svg>Klávesové zkratky</li>
              <li><i class="e"></i><button class="p" aria-label="Rozbalit"></button><svg><use href="#mouse2"/></svg>Akce dvojitým kliknutím</li>
              <li><i class="e"></i><button class="p" aria-label="Rozbalit"></button><svg><use href="#mouse"/></svg>Tlačítka myši</li>
              <li><i class="e"></i><i class="t"></i><svg><use href="#lisp"/></svg>Soubory LISP</li>
              <li><i class="e"></i><button class="p" aria-label="Rozbalit"></button><svg><use href="#clock"/></svg>Staré prvky</li>
              <li><i class="e"></i><button class="p l" aria-label="Rozbalit"></button><svg><use href="#cui"/></svg>Částečné soubory uživatelských úprav</li>
            </ul>
          </div>
        </section>
        <section class="panel">
          <h3>Seznam příkazů:<svg><use href="#dbl"/></svg></h3>
          <div class="find"><input type="text" aria-label="Hledat příkaz" placeholder="Seznam pro vyhledávání příkazů"><button aria-label="Hledat"><svg><use href="#mag"/></svg></button></div>
          <div class="filter"><select aria-label="Kategorie"><option>Pouze všechny příkazy</option></select><button aria-label="Najít oblíbené"><svg><use href="#starmag"/></svg></button><button aria-label="Nová oblíbená"><svg><use href="#stardot"/></svg></button></div>
          <div class="view">
            <table class="cmds">
              <thead><tr><th></th><th>Příkaz</th><th>Zdroj</th><th></th></tr></thead>
              <tbody>
                <tr><td><svg><use href="#c3body"/></svg></td><td>3 body</td><td>ACAD</td></tr>
                <tr><td><svg><use href="#ccurve"/></svg></td><td>3D křivka</td><td>ACAD</td></tr>
                <tr><td><svg><use href="#cscale"/></svg></td><td>3D měřítko</td><td>ACAD</td></tr>
                <tr><td><svg><use href="#corbit"/></svg></td><td>3D omezený orbit</td><td>ACAD</td></tr>
                <tr><td><svg><use href="#corbit"/></svg></td><td>3D orbit</td><td>ACAD</td></tr>
                <tr><td><svg><use href="#cspin"/></svg></td><td>3D otáčení</td><td>ACAD</td></tr>
                <tr><td><svg><use href="#crot"/></svg></td><td>3D otočení</td><td>ACAD</td></tr>
                <tr><td><svg><use href="#cfree"/></svg></td><td>3D plynulý orbit</td><td>ACAD</td></tr>
                <tr><td><svg><use href="#carr"/></svg></td><td>3D pole</td><td>ACAD</td></tr>
                <tr><td><svg><use href="#cmove"/></svg></td><td>3D posun</td><td>ACAD</td></tr>
                <tr><td><svg><use href="#chand"/></svg></td><td>3D posun pohledu</td><td>ACAD</td></tr>
                <tr><td></td><td>3D povrchy...</td><td>ACAD</td></tr>
                <tr><td><svg><use href="#cwalk"/></svg></td><td>3D procházení</td><td>ACAD</td></tr>
                <tr><td><svg><use href="#cfly"/></svg></td><td>3D průlet</td><td>ACAD</td></tr>
                <tr><td><svg><use href="#calign"/></svg></td><td>3D srovnej</td><td>ACAD</td></tr>
                <tr><td><svg><use href="#c3ds"/></svg></td><td>3D studio...</td><td>ACAD</td></tr>
              </tbody>
            </table>
            <div class="sb"><svg><use href="#up"/></svg><i></i><svg><use href="#down"/></svg></div>
          </div>
        </section>
      </div>
      <div class="right">
        <section class="panel">
          <h3>Obsah pracovního prostoru<svg><use href="#dbl"/></svg></h3>
          <div class="act"><button>Upravit pracovní prostor</button><div class="tint edit"></div></div>
          <div class="view">
            <ul class="tree r7">
              <li><button class="m root" aria-label="Sbalit"></button><svg><use href="#gear"/></svg>Kreslení a poznámka Výchozí (aktuální)</li>
              <li><i class="e"></i><button class="m" aria-label="Sbalit"></button><svg><use href="#quick"/></svg>Panel rychlého přístupu</li>
              <li><i class="e"></i><i></i><i class="t l"></i><svg><use href="#quick1"/></svg>Panel nástrojů Rychlý přístup 1</li>
              <li><i class="e"></i><i class="t"></i><svg><use href="#bars"/></svg>Panely nástrojů</li>
              <li><i class="e"></i><button class="p" aria-label="Rozbalit"></button><svg><use href="#menus"/></svg>Nabídky</li>
              <li><i class="e"></i><button class="p" aria-label="Rozbalit"></button><svg><use href="#palettes"/></svg>Palety</li>
              <li><i class="e"></i><button class="p l" aria-label="Rozbalit"></button><svg><use href="#tabs"/></svg>Karty pásu</li>
            </ul>
          </div>
        </section>
        <div class="split"><i></i><i></i><i></i></div>
        <section class="panel grow">
          <h3>Vlastnosti<svg><use href="#dbl"/></svg></h3>
          <div class="sheet">
            <div class="sorts"><button class="on" aria-label="Podle kategorií"><svg><use href="#cat"/></svg></button><button aria-label="Abecedně"><svg><use href="#az"/></svg></button><i></i><button aria-label="Stránky"><svg><use href="#pg"/></svg></button></div>
            <div class="gridbox">
              <table class="pg n10">
                <colgroup><col class="gut"><col class="key"><col></colgroup>
                <tr class="cat"><td><svg><use href="#down"/></svg></td><th colspan="2">Obecné</th></tr>
                <tr><td></td><td>Název</td><td>Kreslení a poznámka</td></tr>
                <tr><td></td><td>Popis</td><td></td></tr>
                <tr class="cat"><td><svg><use href="#down"/></svg></td><th colspan="2">Zobrazení</th></tr>
                <tr><td></td><td>Začít na</td><td>Neměnit</td></tr>
                <tr><td></td><td>Panel nabídek</td><td>Vypnuto</td></tr>
                <tr><td></td><td>Stavový řádek</td><td>Zap</td></tr>
                <tr><td></td><td>Panel navigace</td><td>Zap</td></tr>
                <tr><td></td><td>Karty Model/Rozvržení</td><td>Zap</td></tr>
                <tr><td></td><td>Posuvníky</td><td>Neměnit</td></tr>
              </table>
            </div>
            <div class="desc">Obecné</div>
          </div>
        </section>
      </div>
    </div>
    <footer><button>OK</button><button>Storno</button><button>Použít</button><button>Nápověda</button><button class="round" aria-label="Méně"><svg viewBox="0 0 16 16"><circle cx="8" cy="8" r="7" fill="#f4f7fb" stroke="#1e3a5f" stroke-width="1.500"/><path fill="none" stroke="#111" stroke-width="2.400" d="M10 4L6 8l4 4"/></svg></button></footer>
  </section>

  <aside class="popup">
    <i class="edge"></i>
    <div class="menu">
      <button class="ok">Kreslení a poznámka</button>
      <button>3D základní</button>
      <button>3D modelování</button>
      <hr>
      <button>Uložit aktuální jako...</button>
      <button>Nastavení pracovního prostoru...</button>
      <button class="hot">Přizpůsobit...</button>
      <button>Zobrazit popisek pracovního prostoru</button>
    </div>
    <div class="clipbar"><i class="caret"></i><svg><use href="#cog"/></svg><i class="caret"></i><svg><use href="#plus"/></svg><svg><use href="#iso3"/></svg><svg><use href="#full"/></svg><svg><use href="#ham"/></svg></div>
  </aside>

  <div class="note menunote">MENU BAR = 1<svg viewBox="0 0 22 54"><path fill="none" stroke="#f00" stroke-width="4" stroke-linejoin="round" d="M0 45h16V6"/><circle cx="16" cy="6" r="4" fill="#f00"/></svg></div>
  <div class="note step three">3.</div>
  <div class="note step twon">2.</div>
  <div class="note step onen"><svg viewBox="0 0 18 74"><path fill="#f00" d="M9 0l9 18h-7v56H7V18H0z"/></svg>1.</div>
</main>
</body>
</html>
```
FILE: styles.css
```css
* { box-sizing: border-box; margin: 0; padding: 0; }
html, body { height: 100%; background: #fff; }
body { font: 7px/10px "Open Sans", "Noto Sans", sans-serif; color: #444; overflow: hidden; }
button, input, select { font: inherit; color: inherit; border: 0; background: none; appearance: none; border-radius: 0; outline: 0; }
button { cursor: pointer; }
a { color: inherit; text-decoration: none; }
svg { display: block; flex: none; }
h1, h2, h3 { font-size: inherit; font-weight: normal; }
ul { list-style: none; }
.defs { position: absolute; width: 0; height: 0; }

.app { position: relative; display: flex; flex-direction: column; height: 100vh; margin: 0 1px 0 3px; border: 1px solid #4ba9dc; border-width: 1px 2px 1px 1px; background: #d9d9d9; }

.caret { flex: none; width: 0; height: 0; border: solid transparent; border-width: 2px 2px 0; border-top-color: #666; }
.caret.wide { border-width: 3px 3px 0; border-top-color: #666; }

/* title bar */
.titlebar { display: flex; align-items: center; height: 17px; padding: 0 4px; }
.group { display: flex; align-items: center; gap: 3px; }
.icon svg { width: 12px; height: 12px; }
.quick { margin-left: 9px; gap: 4px; }
.share { display: flex; align-items: center; gap: 3px; color: #2f93dc; }
.share svg { width: 11px; height: 11px; }
h1 { margin: 0 auto; }
h1 span { margin-left: 8px; }
.account { gap: 4px; }
.tri { border: solid transparent; border-width: 3px 0 3px 3px; border-left-color: #666; }
.search { width: 118px; height: 13px; padding: 0 2px; background: #fff; border: 1px solid #c4c4c4; }
.search::placeholder { color: #666; font-style: italic; }
.smudge { width: 38px; height: 6px; margin-right: 12px; background: #b4b4b4; filter: blur(2px); }
.rule { width: 1px; height: 13px; margin: 0 2px 0 3px; background: #efefef; }
.winctl { display: flex; gap: 7px; margin-left: 40px; color: #222; }
.winctl svg { width: 9px; height: 9px; }

.menurow { display: flex; justify-content: space-between; height: 15px; border-bottom: 1px solid #eee; }
.menubar { display: flex; align-items: center; gap: 17px; width: 584px; margin: 0 0 -2px 1px; padding-left: 9px; background: #dfb9ba; color: #6d3b41; }
.winctl.small { align-items: center; gap: 3px; padding-right: 4px; }
.winctl.small svg { width: 8px; height: 8px; }

.ribbontabs { display: flex; align-items: center; gap: 1px; height: 15px; padding: 1px 0 0 3px; }
.ribbontabs a { display: flex; align-items: center; height: 14px; padding: 0 7px; }
.ribbontabs .on { background: #f5f5f5; }
.pin { width: 11px; height: 6px; margin: 0 3px 0 11px; border: 1px solid #888; background: linear-gradient(#666, #666) center/3px 2px no-repeat; }

/* ribbon */
.ribbon { display: flex; height: 64px; margin: 0 1px; background: #f5f5f5; }
.rp { display: flex; flex-direction: column; border-right: 1px solid #dcdcdc; }
.rp.fill { flex: 1; }
.rp .body { flex: 1; display: flex; padding: 4px 3px 0; min-height: 0; }
.rp .col { flex-direction: column; align-items: flex-start; padding: 5px 0 0 42px; gap: 6px; }
.rp .col button { display: flex; align-items: center; gap: 6px; height: 10px; }
.rp footer { position: relative; display: flex; justify-content: center; align-items: center; gap: 5px; height: 12px; }
.corner { position: absolute; right: 4px; bottom: 4px; width: 3px; height: 3px; border: solid #666; border-width: 0 1px 1px 0; }
.rp.block { width: 110px; }
.rp.props { width: 173px; }
.rp.grp { width: 51px; }
.rp.util { width: 63px; }
.rp.clip { width: 53px; }
.rp.base { width: 73px; border: 0; }
.bigbtn { display: flex; flex-direction: column; align-items: center; flex: 1; line-height: 10px; white-space: nowrap; }
.bigbtn svg { width: 20px; height: 22px; margin-bottom: 2px; }
.bigbtn .caret { margin-top: 2px; }
.stack { display: flex; flex-direction: column; gap: 1px; padding-right: 1px; }
.stack button { display: grid; place-items: center; width: 14px; height: 15px; border: 1px solid transparent; }
.stack .on { background: #cfe4f7; border-color: #4ba9dc; }
.stack svg { width: 11px; height: 11px; }
.rp.grp .body { padding: 4px 0 0; }
.fields { display: flex; flex-direction: column; gap: 1px; margin: -1px -2px 0 4px; }
.fld { display: flex; align-items: center; gap: 2px; }
.fld svg { width: 11px; height: 11px; }
.box { display: flex; align-items: center; width: 118px; height: 15px; padding-left: 2px; background: #fff; border: 1px solid #ddd; }
.swatch { width: 10px; height: 10px; margin: 0 7px 0 6px; background: #000; }
.line { width: 42px; height: 1px; margin-right: 1px; background: #555; }
.box select { flex: 1; min-width: 0; height: 12px; background: url("data:image/svg+xml,%3Csvg xmlns='http://www.w3.org/2000/svg' viewBox='0 0 6 4'%3E%3Cpath fill='%23555' d='M0 0h6L3 4z'/%3E%3C/svg%3E") right 1px center/5px 3px no-repeat; }

/* drawing area */
.canvas { position: relative; flex: 1; margin: 18px 0 0 1px; background: #fff; border-top: 2px solid #efefef; }
.cube { position: absolute; top: 10px; right: 10px; width: 90px; height: 60px; font: bold 11px "Open Sans", sans-serif; text-anchor: middle; }
.cube .dir { fill: #e4e4e4; stroke: #aaa; stroke-width: 1; paint-order: stroke; }
.cube .face { fill: #7a7a7a; font-size: 7px; }
.toolbars { position: absolute; left: 8px; bottom: 66px; display: flex; flex-direction: column; align-items: flex-start; gap: 7px; padding: 5px; border: 6px solid #ffd6d6; border-radius: 6px; }
.tb { display: flex; align-items: center; height: 16px; margin: 0 0 0 -1px; background: #f3f3f3; border: 1px solid #cfcfcf; }
.grip { width: 3px; height: 10px; margin: 0 2px; background: repeating-linear-gradient(#aaa 0 1px, #ddd 1px 2px); }
.tb button { display: grid; place-items: center; width: 15px; height: 14px; }
.tb svg { width: 12px; height: 12px; fill: none; }
.tb .x { width: 5px; height: 12px; place-items: start center; }
.tb .x svg { width: 5px; height: 5px; }
.tb .letter { font-size: 11px; font-weight: 600; line-height: 12px; }
.k { fill: none; stroke: #777; stroke-width: 1; }
.b { fill: none; stroke: #3490d8; stroke-width: 1.3; }
.d { fill: none; stroke: #333; stroke-width: 1.2; }
.ucs { position: absolute; left: 11px; bottom: 10px; width: 54px; height: 54px; font: 12px "Open Sans", sans-serif; fill: #333; }
.cmdline { position: absolute; left: 239px; right: 0; bottom: 0; display: flex; align-items: center; gap: 1px; height: 17px; border: 1px solid #d5d5d5; border-width: 1px 0 0 1px; font: italic 8px/10px "Liberation Mono", monospace; color: #888; }
.tools { display: flex; align-items: center; gap: 3px; height: 100%; padding-right: 1px; background: #dedede; }
.tools svg { width: 7px; height: 7px; }
.tools .w svg { width: 12px; height: 12px; }
.tools .w { margin-left: 3px; }
.cmdline > svg { width: 11px; height: 11px; margin-left: 1px; }
.cmdline input { flex: 1; padding-left: 3px; }
.cmdline input::placeholder { color: #888; }

.bottom { display: flex; justify-content: space-between; height: 21px; padding-left: 12px; }
.layouts { display: flex; height: 12px; gap: 3px; color: #777; }
.layouts a { display: flex; align-items: center; padding: 0 6px; background: #e3e3e3; border-radius: 0 0 6px 6px; }
.layouts .on { background: #f6f6f6; color: #333; font-weight: bold; }
.layouts .add { padding: 0 5px; font-size: 10px; }
.status { display: flex; align-items: center; height: 16px; margin-top: 1px; padding: 0 3px 0 2px; background: #f0f0f0; }
.status button { display: grid; place-items: center; width: 16px; height: 15px; }
.status svg { width: 12px; height: 12px; }
.status .caret { margin: 0 4px; border-width: 3px 2px 0; }
.status .tight { margin: 0 2px 0 0; }
.status .txt { width: 34px; font-weight: 600; color: #333; }
.status .scale { width: 17px; }
.status .on { width: 14px; background: #cfe4f7; border: 1px solid #4ba9dc; }
.status .gap { margin-left: 2px; }

/* dialogs */
.dialog { position: absolute; display: flex; flex-direction: column; border: 1px solid #8a8a8a; background: #f0f0f0; font-family: Roboto, "Liberation Sans", sans-serif; color: #222; }
.dialog.one { left: -3px; width: 733px; top: 51px; bottom: 160px; }
.dialog.two { left: 460px; right: -1px; top: 188px; bottom: 23px; }
.dialog > header { display: flex; align-items: center; height: 20px; padding: 0 10px 0 6px; background: #fff; font-family: "Open Sans", sans-serif; }
.lg { width: 9px; height: 9px; margin-right: 4px; }
.dialog h2 { flex: 1; }
.dialog > header button { margin-left: 20px; }
.dialog > header button svg { width: 10px; height: 10px; }
.dtabs { display: flex; align-items: flex-end; height: 17px; padding-left: 2px; border-bottom: 1px solid #dcdcdc; }
.dtabs a { height: 12px; padding: 0 3px; line-height: 12px; border: 1px solid #dcdcdc; border-width: 1px 1px 0; }
.dtabs .on { height: 15px; background: #fff; line-height: 14px; border-color: #fff; }
.content { flex: 1; display: grid; grid-template-columns: 347fr 357fr; column-gap: 16px; min-height: 0; padding: 1px 7px 3px 4px; }
.left { display: grid; grid-template-rows: 260fr 255fr; row-gap: 6px; min-height: 0; padding-right: 1px; }
.right { display: flex; flex-direction: column; min-height: 0; padding: 2px; background: #d3d9df; border: 1px solid #8f9ca8; }
.panel { display: flex; flex-direction: column; min-height: 0; background: #f0f0f0; border: 1px solid #9aa6b2; }
h3 { display: flex; flex: none; align-items: center; justify-content: space-between; height: 15px; padding: 0 3px 0 4px; background: linear-gradient(#fff 40%, #e2e6ea); border-bottom: 1px solid #9aa6b2; font-family: "Liberation Sans", sans-serif; font-weight: bold; color: #111; }
h3 svg { width: 9px; height: 9px; }
.dialog select { padding: 0 2px; border: 1px solid #bbb; background: #dfdfdf url("data:image/svg+xml,%3Csvg xmlns='http://www.w3.org/2000/svg' viewBox='0 0 8 5'%3E%3Cpath fill='none' stroke='%23666' d='M1 1l3 3 3-3'/%3E%3C/svg%3E") right 3px center/6px 4px no-repeat; }
.pick { display: flex; flex: none; align-items: center; height: 15px; padding-right: 4px; }
.pick select { flex: 1; height: 14px; margin-right: 2px; }
.pick.dim select { background-color: #cccccc; border-color: #ccc; }
.pick button { margin-left: 4px; }
.pick svg { width: 11px; height: 11px; }
.find { display: flex; flex: none; align-items: center; gap: 4px; height: 24px; padding-right: 4px; }
.find input { flex: 1; height: 13px; padding: 0 2px; background: #fff; border: 1px solid #8b8b8b; }
.find input::placeholder { color: #a9bac9; font-style: italic; }
.find svg { width: 12px; height: 12px; }
.filter { display: flex; flex: none; align-items: center; gap: 3px; height: 14px; margin-bottom: 4px; padding-right: 11px; }
.filter select { flex: 1; height: 14px; margin-right: 2px; }
.filter svg { width: 12px; height: 12px; }
.view { position: relative; flex: 1; display: flex; min-height: 0; overflow: hidden; background: #fff; border: 1px solid #858c94; }
.panel:last-child > .view { border-width: 1px 0 0; }
.sb { display: flex; flex-direction: column; align-items: center; width: 10px; background: #f0f0f0; }
.sb svg { width: 8px; height: 9px; }
.sb i { flex: none; width: 10px; height: 11px; margin: 1px 0 auto; background: #cdcdcd; }
.sb.long i { height: 69px; }

/* trees */
.tree { flex: 1; display: grid; grid-auto-rows: 1fr; align-self: flex-start; padding-left: 1px; }
.right .tree { padding-left: 0; }
.r22 { height: 230px; }
.r18 { height: 188px; }
.r10 { height: 105px; }
.r7 { height: 73px; }
.tree li, .tree label { display: flex; align-items: center; white-space: nowrap; }
.tree svg { width: 10px; height: 10px; margin-right: 4px; }
.tree i, .tree button { position: relative; flex: none; align-self: stretch; width: 12px; background: repeating-linear-gradient(#bbb 0 1px, transparent 1px 2px) 6px 0/1px 100% no-repeat; }
.tree .t, .tree button { margin-right: 1px; background: repeating-linear-gradient(#bbb 0 1px, transparent 1px 2px) 6px 0/1px 100% no-repeat, repeating-linear-gradient(90deg, #bbb 0 1px, transparent 1px 2px) right center/6px 1px no-repeat; }
.tree .l { background-size: 1px 50%, 6px 1px; }
.tree .root { background-size: 0 0, 6px 1px; }
.tree .e { background: none; }
.tree button::before { content: ""; position: absolute; left: 3px; top: calc(50% - 3px); width: 7px; height: 7px; box-sizing: border-box; border: 1px solid #b4b4b4; background: linear-gradient(#4a5fa0, #4a5fa0) center/3px 1px no-repeat, #fff; }
.tree .p::before { background: linear-gradient(#4a5fa0, #4a5fa0) center/3px 1px no-repeat, linear-gradient(#4a5fa0, #4a5fa0) center/1px 3px no-repeat, #fff; }
.tree b { padding: 0 2px; margin-left: -2px; font-weight: normal; line-height: 10px; }
.tree .sel { background: #0a74d6; color: #fff; }
.blue { color: #1a1ae6; }
.tree .idle { background: #eee; color: #222; }
.tree input { position: relative; width: 9px; height: 9px; margin-right: 1px; background: #fff; border: 1px solid #666; }
.tree input::before { box-sizing: border-box; }
.tree .part::before { content: ""; position: absolute; inset: 1px; background: #5f9a35; }
.tree input:checked::before { content: ""; position: absolute; left: 2px; top: 0; width: 4px; height: 6px; border: solid #4f8f1f; border-width: 0 1px 1px 0; transform: rotate(45deg); }
.tint { position: absolute; background: rgba(255, 0, 0, .15); }
.branch { left: 14px; top: 72px; bottom: 0; width: 129px; }

/* command list */
.cmds { flex: 1; align-self: flex-start; height: 196px; border-collapse: collapse; table-layout: fixed; }
.cmds th { height: 18px; font-weight: normal; text-align: left; padding-left: 4px; border-right: 1px solid #e5e5e5; }
.cmds th:nth-child(1) { width: 14px; padding: 0; }
.cmds th:nth-child(2) { width: 131px; }
.cmds th:nth-child(3) { width: 54px; }
.cmds th:last-child { border: 0; }
.cmds td { padding-left: 4px; line-height: 9px; }
.cmds td:first-child { padding-left: 3px; }
.cmds svg { width: 10px; height: 10px; background: #f0f0f0; }

.act { position: relative; flex: none; height: 14px; }
.act button { min-width: 92px; height: 14px; background: #e6e6e6; border: 1px solid #bdbdbd; }
.edit { left: -1px; top: -1px; width: 94px; height: 18px; background: rgba(220, 0, 0, .22); z-index: 1; }
.right > .panel:first-child { flex: 0 0 auto; height: 144px; }
.split { display: flex; flex: none; justify-content: center; align-items: center; gap: 2px; height: 4px; margin: 4px 0 1px; background: #8f94a3; }
.split i { width: 2px; height: 2px; background: #eee; }
.grow { flex: 1; }
.sheet { flex: 1; display: flex; flex-direction: column; min-height: 0; padding: 6px 5px 2px 4px; }
.sorts { display: flex; align-items: center; gap: 3px; height: 16px; padding-left: 1px; }
.sorts button { display: grid; place-items: center; width: 14px; height: 14px; }
.sorts .on { background: #b9dbf5; border: 1px solid #8fc3ea; }
.sorts svg { width: 11px; height: 11px; }
.sorts i { width: 1px; height: 12px; background: #aaa; }
.gridbox { flex: 1; min-height: 0; background: #fff; border: 1px solid #b5b5b5; }
.pg { width: 100%; border-collapse: collapse; table-layout: fixed; }
.gut { width: 13px; }
.key { width: 43%; }
.n10 { height: 106px; }
.n5 { height: 53px; }
.pg td, .pg th { border: 1px solid #dadada; border-left: 0; border-top: 0; padding: 0 2px; text-align: left; line-height: 9px; font-weight: normal; }
.pg td:first-child { background: #c9c9c9; border-color: #c9c9c9; }
.pg .cat td, .pg .cat th { background: #c9c9c9; border-color: #c9c9c9; font-family: "Liberation Sans", sans-serif; font-weight: bold; color: #111; }
.pg svg { width: 8px; height: 8px; }
.off { color: #888; }
.desc { height: 38px; margin-top: 2px; padding: 0 2px; border: 1px solid #b5b5b5; font-family: "Liberation Sans", sans-serif; font-weight: bold; color: #111; }
.dialog > footer { display: flex; flex: none; justify-content: flex-end; align-items: center; gap: 12px; height: 28px; padding: 0 9px 6px 0; border-top: 1px solid #fbfbfb; }
.dialog > footer button { width: 48px; height: 14px; background: #e4e4e4; border: 1px solid #adadad; font-family: "Open Sans", sans-serif; }
.dialog > footer .round { width: 15px; height: 15px; margin-left: -6px; border: 0; background: none; }

/* workspace menu */
.popup { position: absolute; right: 24px; bottom: 38px; width: 187px; padding: 8px 14px 6px 0; background: #fff; box-shadow: 0 0 6px 3px rgba(0, 0, 0, .45); }
.edge { position: absolute; left: 105px; top: 0; width: 2px; height: 8px; background: #4ba9dc; }
.menu { margin-left: 8px; border: 1px solid #dedede; background: #fff; font-weight: 600; color: #444; }
.menu button { position: relative; display: block; width: 100%; height: 16px; padding-left: 13px; text-align: left; white-space: nowrap; }
.menu .hot { background: #dedede; }
.menu .ok::before { content: ""; position: absolute; left: 5px; top: 5px; width: 3px; height: 5px; border: solid #333; border-width: 0 1px 1px 0; transform: rotate(40deg); }
.menu hr { border: 0; border-top: 1px solid #ddd; margin: 1px 0; }
.clipbar { display: flex; align-items: center; gap: 5px; width: 107px; height: 20px; background: #f0f0f0; border: solid #4ba9dc; border-width: 0 2px 2px 0; }
.clipbar svg { width: 12px; height: 12px; }

/* callouts */
.note { position: absolute; color: #f00; font-family: Lato, "Open Sans", sans-serif; font-weight: 900; pointer-events: none; }
.menunote { left: 423px; top: 19px; display: flex; align-items: flex-end; gap: 2px; font-size: 20px; line-height: 19px; white-space: nowrap; }
.menunote svg { width: 22px; height: 54px; }
.step { display: flex; align-items: flex-end; font-size: 35px; line-height: 36px; }
.three { left: 152px; top: 246px; }
.twon { left: 658px; top: 271px; }
.onen { right: 43px; bottom: 21px; gap: 6px; line-height: 56px; }
.onen svg { width: 18px; height: 74px; }
```
